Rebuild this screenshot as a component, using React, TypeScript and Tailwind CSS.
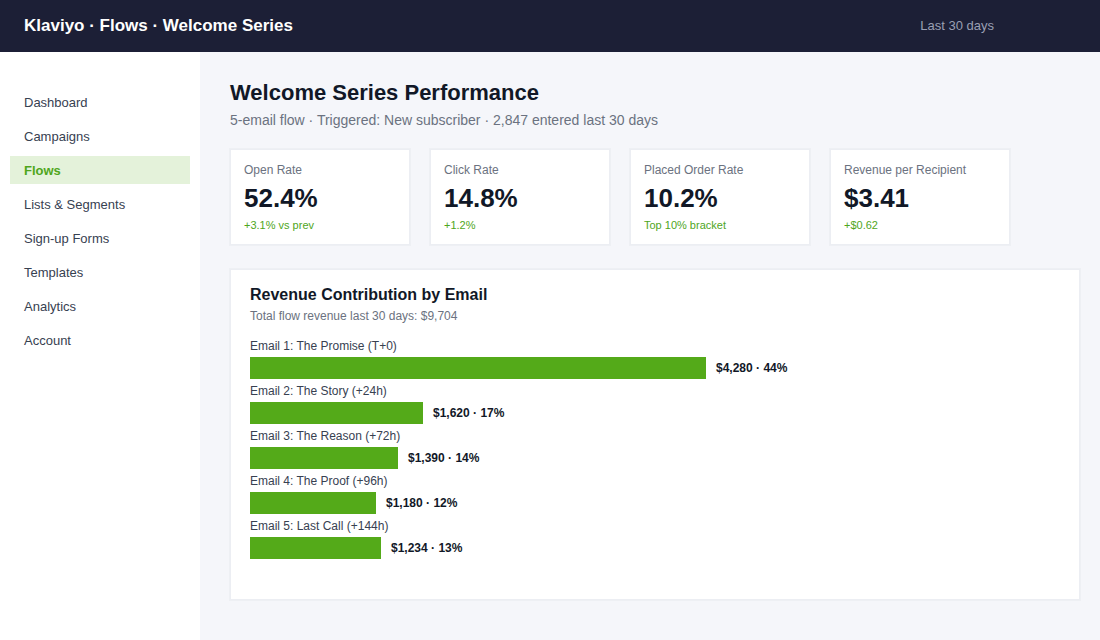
import React from "react";

const nav = [
  "Dashboard",
  "Campaigns",
  "Flows",
  "Lists & Segments",
  "Sign-up Forms",
  "Templates",
  "Analytics",
  "Account",
];

const stats = [
  { label: "Open Rate", value: "52.4%", note: "+3.1% vs prev" },
  { label: "Click Rate", value: "14.8%", note: "+1.2%" },
  { label: "Placed Order Rate", value: "10.2%", note: "Top 10% bracket" },
  { label: "Revenue per Recipient", value: "$3.41", note: "+$0.62" },
];

const emails = [
  { name: "Email 1: The Promise (T+0)", revenue: 4280, pct: 44 },
  { name: "Email 2: The Story (+24h)", revenue: 1620, pct: 17 },
  { name: "Email 3: The Reason (+72h)", revenue: 1390, pct: 14 },
  { name: "Email 4: The Proof (+96h)", revenue: 1180, pct: 12 },
  { name: "Email 5: Last Call (+144h)", revenue: 1234, pct: 13 },
];

const maxRevenue = 4280;
const maxBar = 456;

export default function App() {
  return (
    <div
      className="w-[1100px] h-[640px] flex flex-col overflow-hidden"
      style={{ fontFamily: '"Liberation Sans", Arial, sans-serif' }}
    >
      <header className="h-[52px] shrink-0 bg-[#1c1f36] flex items-center justify-between pl-6 pr-[106px]">
        <div className="text-white font-bold text-[17px]">Klaviyo · Flows · Welcome Series</div>
        <div className="text-[#9a9fb3] text-[13px]">Last 30 days</div>
      </header>
      <div className="flex flex-1 min-h-0">
        <aside className="w-[200px] shrink-0 bg-white px-[10px] pt-[36px] flex flex-col gap-[6px]">
          {nav.map((item) => {
            const active = item === "Flows";
            return (
              <div
                key={item}
                className={
                  active
                    ? "h-[28px] flex items-center px-[14px] pt-[2px] text-[13px] font-bold text-[#4fa61c] bg-[#e4f2da]"
                    : "h-[28px] flex items-center px-[14px] pt-[2px] text-[13px] text-[#374151]"
                }
              >
                {item}
              </div>
            );
          })}
        </aside>
        <main className="flex-1 bg-[#f5f6fa] pl-[30px] pr-[20px] pt-[27px]">
          <h1 className="text-[22px] leading-[28px] font-bold text-[#111827]">Welcome Series Performance</h1>
          <div className="mt-[4px] text-[14px] leading-[18px] text-[#6b7280]">
            5-email flow · Triggered: New subscriber · 2,847 entered last 30 days
          </div>
          <div className="mt-[20px] flex gap-[20px]">
            {stats.map((s) => (
              <div
                key={s.label}
                className="w-[180px] h-[96px] bg-white border border-[#eceef3] shadow-[0_0_0_1px_#eef0f4] px-[13px] pt-[12px]"
              >
                <div className="text-[12px] leading-[16px] text-[#6b7280]">{s.label}</div>
                <div className="mt-[5px] text-[26px] leading-[30px] font-bold text-[#111827]">{s.value}</div>
                <div className="mt-[5px] text-[11px] leading-[14px] text-[#4fa61c]">{s.note}</div>
              </div>
            ))}
          </div>
          <section className="mt-[24px] w-[850px] h-[331px] bg-white border border-[#eceef3] shadow-[0_0_0_1px_#eef0f4] px-[19px] pt-[15px]">
            <h2 className="text-[16px] leading-[20px] font-bold text-[#111827]">Revenue Contribution by Email</h2>
            <div className="mt-[3px] text-[12px] leading-[16px] text-[#6b7280]">
              Total flow revenue last 30 days: $9,704
            </div>
            <div className="mt-[14px] flex flex-col gap-[4px]">
              {emails.map((e) => (
                <div key={e.name}>
                  <div className="text-[12px] leading-[16px] text-[#374151]">{e.name}</div>
                  <div className="mt-[3px] flex items-center gap-[10px]">
                    <div
                      className="h-[22px] bg-[#54aa19]"
                      style={{ width: `${Math.round((e.revenue / maxRevenue) * maxBar)}px` }}
                    />
                    <div className="text-[12px] font-bold text-[#111827]">
                      ${e.revenue.toLocaleString("en-US")} · {e.pct}%
                    </div>
                  </div>
                </div>
              ))}
            </div>
          </section>
        </main>
      </div>
    </div>
  );
}
